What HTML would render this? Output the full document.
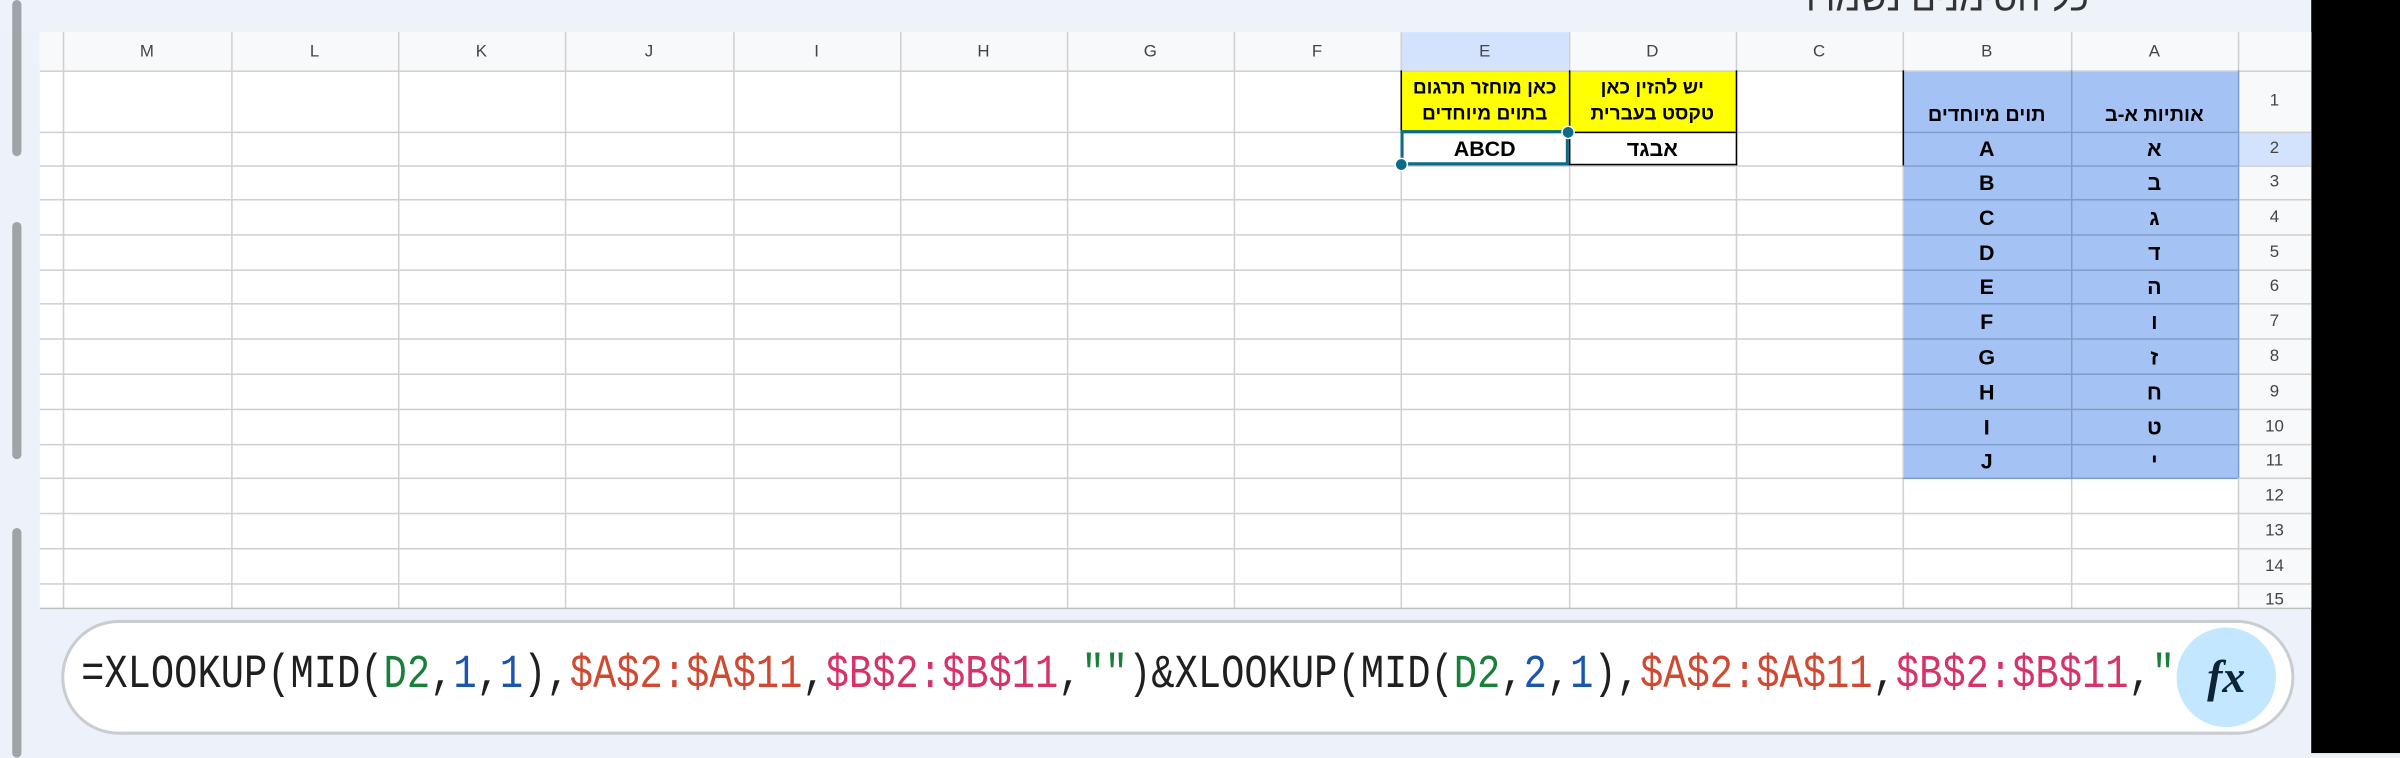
<!DOCTYPE html>
<html><head><meta charset="utf-8"><style>
html,body{margin:0;padding:0;width:2400px;height:753px;overflow:hidden;background:#edf2fa}
#w{position:absolute;left:0;top:0;width:1568px;height:492px;transform:scale(1.5306122);transform-origin:0 0;font-family:"Liberation Sans","Noto Sans CJK JP",sans-serif}
.a{position:absolute}
.v{position:absolute;width:1px;background:#d0d0d0}
.h{position:absolute;height:1px;background:#d0d0d0}
.c{position:absolute;display:flex;align-items:center;justify-content:center;font-weight:bold;font-size:14px;color:#000}
.hd{position:absolute;top:21px;height:25px;display:flex;align-items:center;justify-content:center;font-size:11px;color:#444}
.rn{position:absolute;left:1462px;width:48px;display:flex;align-items:center;justify-content:center;font-size:11px;color:#444}
</style></head><body><div id="w">
<div class="a" style="left:0;top:0;width:1568px;height:21px;background:#eef3fa;overflow:hidden">
 <div class="a" style="left:1180px;top:-14px;font-size:24px;color:#333;direction:rtl">כל הסימנים נשמרו</div>
</div>
<div class="a" style="left:1510px;top:0;width:58px;height:492px;background:#000"></div>
<div class="a" style="left:8px;top:0;width:6px;height:102px;background:#a0a4a8;border-radius:3px"></div>
<div class="a" style="left:8px;top:145px;width:6px;height:155px;background:#a0a4a8;border-radius:3px"></div>
<div class="a" style="left:8px;top:345px;width:6px;height:150px;background:#a0a4a8;border-radius:3px"></div>
<div class="a" style="left:26px;top:21px;width:1484px;height:377px;background:#fff"></div>
<div class="a" style="left:26px;top:21px;width:1484px;height:25px;background:#f8f9fb"></div>
<div class="a" style="left:1462px;top:21px;width:48px;height:377px;background:#f8f9fb"></div>
<div class="a" style="left:915px;top:21px;width:110px;height:25px;background:#d3e3fd"></div>
<div class="a" style="left:1462px;top:86px;width:48px;height:22px;background:#d3e3fd"></div>
<div class="a" style="left:1243px;top:46px;width:219px;height:266px;background:#a4c2f4"></div>
<div class="a" style="left:915px;top:46px;width:219px;height:40px;background:#ffff00"></div>
<div class="v" style="left:41px;top:21px;height:377px"></div>
<div class="v" style="left:151px;top:21px;height:377px"></div>
<div class="v" style="left:260px;top:21px;height:377px"></div>
<div class="v" style="left:369px;top:21px;height:377px"></div>
<div class="v" style="left:479px;top:21px;height:377px"></div>
<div class="v" style="left:588px;top:21px;height:377px"></div>
<div class="v" style="left:697px;top:21px;height:377px"></div>
<div class="v" style="left:806px;top:21px;height:377px"></div>
<div class="v" style="left:915px;top:21px;height:377px"></div>
<div class="v" style="left:1025px;top:21px;height:377px"></div>
<div class="v" style="left:1134px;top:21px;height:377px"></div>
<div class="v" style="left:1243px;top:21px;height:377px"></div>
<div class="v" style="left:1353px;top:21px;height:377px"></div>
<div class="v" style="left:1462px;top:21px;height:377px"></div>
<div class="h" style="left:26px;top:46px;width:1484px"></div>
<div class="h" style="left:26px;top:86px;width:1484px"></div>
<div class="h" style="left:26px;top:108px;width:1484px"></div>
<div class="h" style="left:26px;top:130px;width:1484px"></div>
<div class="h" style="left:26px;top:153px;width:1484px"></div>
<div class="h" style="left:26px;top:176px;width:1484px"></div>
<div class="h" style="left:26px;top:198px;width:1484px"></div>
<div class="h" style="left:26px;top:221px;width:1484px"></div>
<div class="h" style="left:26px;top:244px;width:1484px"></div>
<div class="h" style="left:26px;top:267px;width:1484px"></div>
<div class="h" style="left:26px;top:290px;width:1484px"></div>
<div class="h" style="left:26px;top:312px;width:1484px"></div>
<div class="h" style="left:26px;top:335px;width:1484px"></div>
<div class="h" style="left:26px;top:358px;width:1484px"></div>
<div class="h" style="left:26px;top:381px;width:1484px"></div>
<div class="h" style="left:26px;top:397px;width:1484px;background:#c0c0c0"></div>
<div class="a" style="left:1353px;top:46px;width:1px;height:266px;background:#7d9bd0"></div>
<div class="a" style="left:1462px;top:46px;width:1px;height:266px;background:#7d9bd0"></div>
<div class="a" style="left:1243px;top:86px;width:219px;height:1px;background:#7d9bd0;box-shadow:0 22px 0 #7d9bd0,0 44px 0 #7d9bd0,0 67px 0 #7d9bd0,0 90px 0 #7d9bd0,0 112px 0 #7d9bd0,0 135px 0 #7d9bd0,0 158px 0 #7d9bd0,0 181px 0 #7d9bd0,0 204px 0 #7d9bd0,0 226px 0 #7d9bd0"></div>
<div class="a" style="left:1243px;top:46px;width:1px;height:62px;background:#000"></div>
<div class="a" style="left:915px;top:46px;width:218px;height:61px;border:1px solid #000;border-top:none"></div>
<div class="a" style="left:1025px;top:46px;width:1px;height:62px;background:#000"></div>
<div class="a" style="left:915px;top:86px;width:219px;height:1px;background:#000"></div>
<div class="hd" style="left:41px;width:110px">M</div>
<div class="hd" style="left:151px;width:109px">L</div>
<div class="hd" style="left:260px;width:109px">K</div>
<div class="hd" style="left:369px;width:110px">J</div>
<div class="hd" style="left:479px;width:109px">I</div>
<div class="hd" style="left:588px;width:109px">H</div>
<div class="hd" style="left:697px;width:109px">G</div>
<div class="hd" style="left:806px;width:109px">F</div>
<div class="hd" style="left:915px;width:110px">E</div>
<div class="hd" style="left:1025px;width:109px">D</div>
<div class="hd" style="left:1134px;width:109px">C</div>
<div class="hd" style="left:1243px;width:110px">B</div>
<div class="hd" style="left:1353px;width:109px">A</div>
<div class="rn" style="top:46px;height:40px">1</div>
<div class="rn" style="top:86px;height:22px">2</div>
<div class="rn" style="top:108px;height:22px">3</div>
<div class="rn" style="top:130px;height:23px">4</div>
<div class="rn" style="top:153px;height:23px">5</div>
<div class="rn" style="top:176px;height:22px">6</div>
<div class="rn" style="top:198px;height:23px">7</div>
<div class="rn" style="top:221px;height:23px">8</div>
<div class="rn" style="top:244px;height:23px">9</div>
<div class="rn" style="top:267px;height:23px">10</div>
<div class="rn" style="top:290px;height:22px">11</div>
<div class="rn" style="top:312px;height:23px">12</div>
<div class="rn" style="top:335px;height:23px">13</div>
<div class="rn" style="top:358px;height:23px">14</div>
<div class="rn" style="top:381px;height:17px;align-items:flex-end">15</div>
<div class="c" style="left:915px;top:46px;width:110px;height:40px;font-size:12.5px;line-height:17px;text-align:center;direction:rtl">כאן מוחזר תרגום<br>בתוים מיוחדים</div>
<div class="c" style="left:1025px;top:46px;width:109px;height:40px;font-size:12.5px;line-height:17px;text-align:center;direction:rtl">יש להזין כאן<br>טקסט בעברית</div>
<div class="c" style="left:1243px;top:62px;width:110px;height:24px;font-size:13px;direction:rtl">תוים מיוחדים</div>
<div class="c" style="left:1353px;top:62px;width:109px;height:24px;font-size:13px;direction:rtl">אותיות א-ב</div>
<div class="c" style="left:915px;top:86px;width:110px;height:22px">ABCD</div>
<div class="c" style="left:1025px;top:86px;width:109px;height:22px">אבגד</div>
<div class="c" style="left:1243px;top:86px;width:110px;height:22px">A</div><div class="c" style="left:1353px;top:86px;width:109px;height:22px">א</div>
<div class="c" style="left:1243px;top:108px;width:110px;height:22px">B</div><div class="c" style="left:1353px;top:108px;width:109px;height:22px">ב</div>
<div class="c" style="left:1243px;top:130px;width:110px;height:23px">C</div><div class="c" style="left:1353px;top:130px;width:109px;height:23px">ג</div>
<div class="c" style="left:1243px;top:153px;width:110px;height:23px">D</div><div class="c" style="left:1353px;top:153px;width:109px;height:23px">ד</div>
<div class="c" style="left:1243px;top:176px;width:110px;height:22px">E</div><div class="c" style="left:1353px;top:176px;width:109px;height:22px">ה</div>
<div class="c" style="left:1243px;top:198px;width:110px;height:23px">F</div><div class="c" style="left:1353px;top:198px;width:109px;height:23px">ו</div>
<div class="c" style="left:1243px;top:221px;width:110px;height:23px">G</div><div class="c" style="left:1353px;top:221px;width:109px;height:23px">ז</div>
<div class="c" style="left:1243px;top:244px;width:110px;height:23px">H</div><div class="c" style="left:1353px;top:244px;width:109px;height:23px">ח</div>
<div class="c" style="left:1243px;top:267px;width:110px;height:23px">I</div><div class="c" style="left:1353px;top:267px;width:109px;height:23px">ט</div>
<div class="c" style="left:1243px;top:290px;width:110px;height:22px">J</div><div class="c" style="left:1353px;top:290px;width:109px;height:22px">י</div>
<div class="a" style="left:915px;top:85px;width:106px;height:19px;border:2px solid #0e6b87"></div>
<div class="a" style="left:1020px;top:82px;width:7px;height:7px;border-radius:50%;background:#0e6b87;border:1px solid #fff"></div>
<div class="a" style="left:911px;top:103px;width:7px;height:7px;border-radius:50%;background:#0e6b87;border:1px solid #fff"></div>
<div class="a" style="left:40px;top:405px;width:1455px;height:71px;background:#fff;border:2px solid #c9ccd0;border-radius:38px;overflow:hidden">
 <div class="a" style="left:11px;top:18px;white-space:nowrap;font-family:'Liberation Mono',monospace;font-size:31px;line-height:34px;color:#1f1f1f;transform:scaleX(0.817);transform-origin:0 0">=XLOOKUP(MID(<span style="color:#188038">D2</span>,<span style="color:#1a55b0">1</span>,<span style="color:#1a55b0">1</span>),<span style="color:#d04a33">$A$2:$A$11</span>,<span style="color:#d6336c">$B$2:$B$11</span>,<span style="color:#188038">""</span>)&amp;XLOOKUP(MID(<span style="color:#188038">D2</span>,<span style="color:#1a55b0">2</span>,<span style="color:#1a55b0">1</span>),<span style="color:#d04a33">$A$2:$A$11</span>,<span style="color:#d6336c">$B$2:$B$11</span>,<span style="color:#188038">"</span></div>
 <div class="a" style="left:1376px;top:0;width:85px;height:71px;background:#fff"></div>
 <div class="a" style="left:1380px;top:3px;width:65px;height:65px;border-radius:50%;background:#c2e7ff;display:flex;align-items:center;justify-content:center;font-family:'Liberation Serif',serif;font-style:italic;font-weight:bold;font-size:30px;color:#0b2536">fx</div>
</div>
</div></body></html>
